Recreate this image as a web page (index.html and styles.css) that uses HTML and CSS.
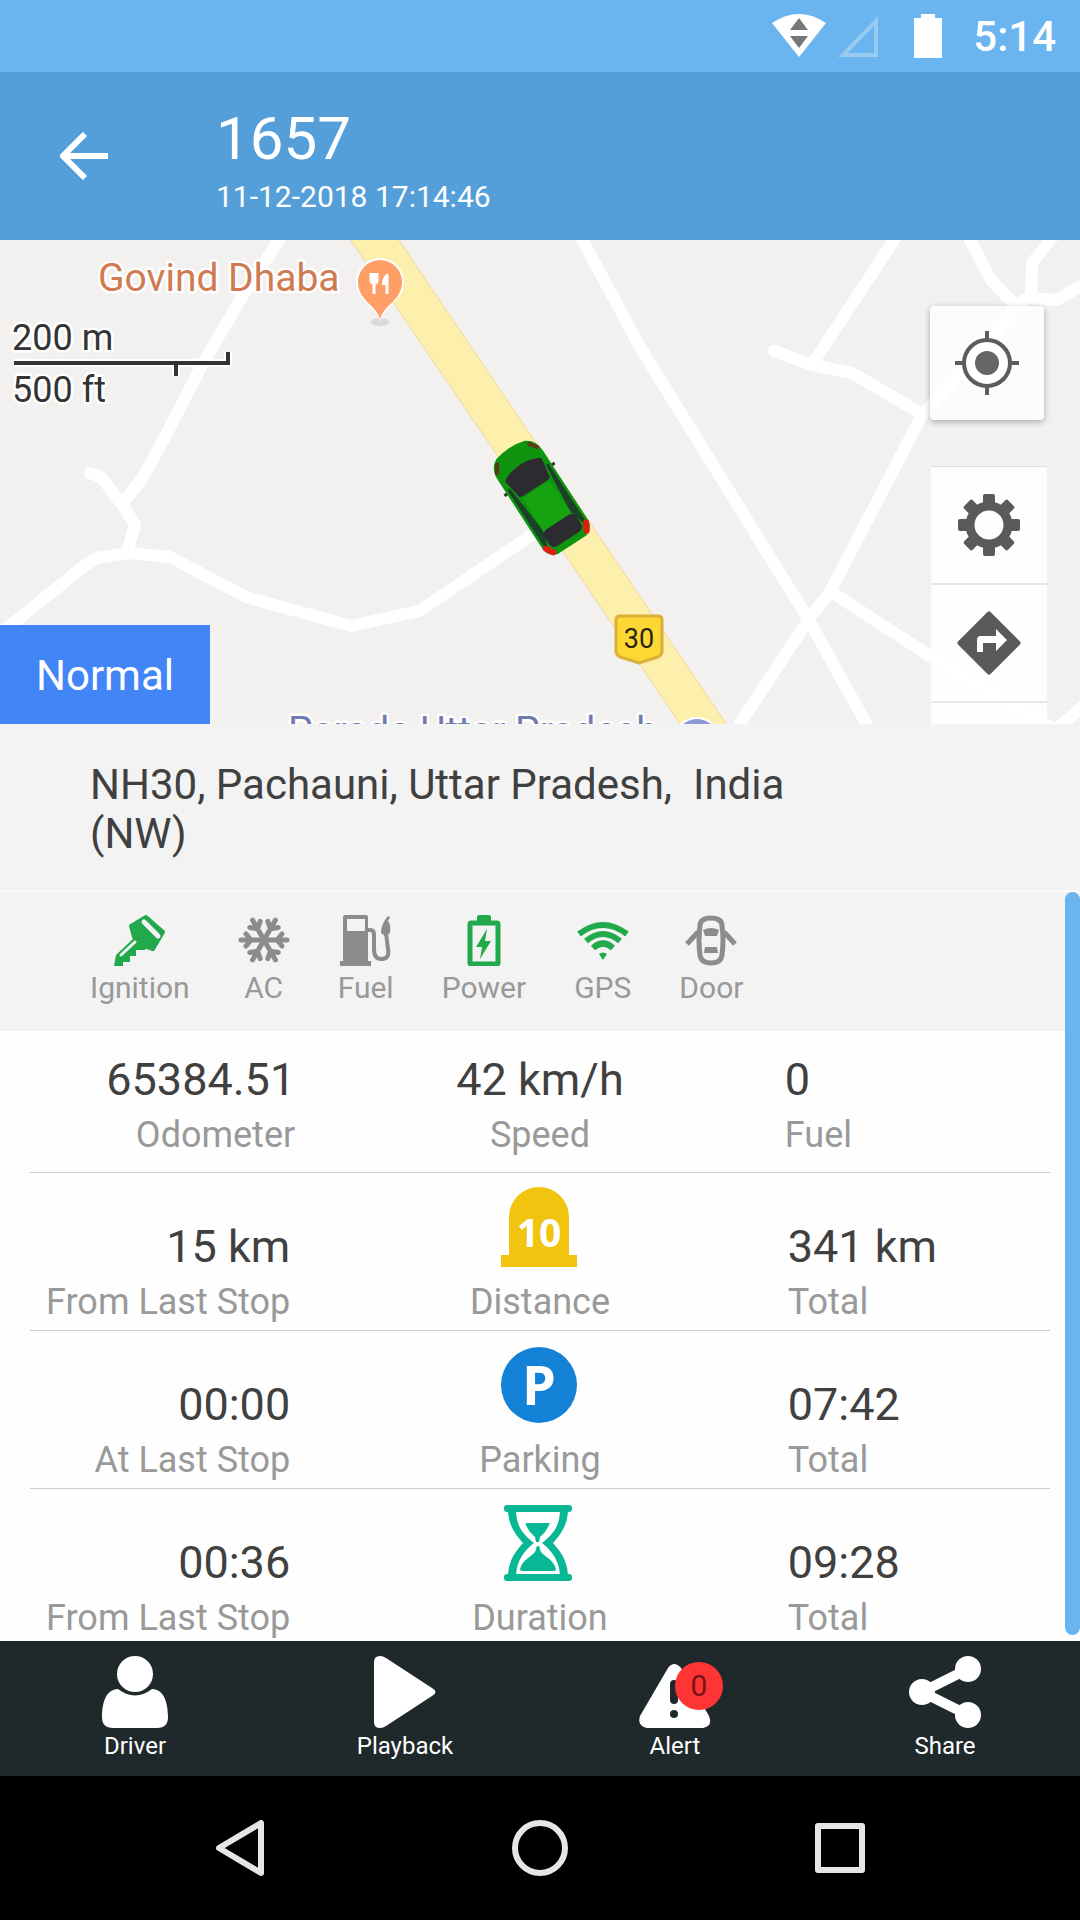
FILE: index.html
```html
<!DOCTYPE html>
<html lang="en">

<head>
    <meta charset="UTF-8">
    <meta name="viewport" content="width=device-width, initial-scale=1.0">
    <title>Vehicle 1657</title>
    <link rel="stylesheet" href="styles.css">
</head>

<body>
    <div class="status-bar">
        <svg class="wifi" width="54" height="44" viewBox="0 0 54 44">
            <path d="M0 9Q27-9 54 9L27 43z" fill="#fff" />
            <path d="M27 4l9 12H18zM18 22h18l-9 12z" fill="#777" />
        </svg>
        <svg class="signal" width="44" height="44" viewBox="0 0 44 44">
            <path d="M40 7v34H7z" fill="none" stroke="#97cbf2" stroke-width="4" />
        </svg>
        <svg class="battery" width="28" height="44" viewBox="0 0 28 44">
            <path d="M7 0h14v4h7v40H0V4h7z" fill="#fff" />
        </svg>
        <span class="clock">5:14</span>
    </div>

    <header class="header">
        <button class="back-btn" aria-label="Back">
            <svg width="48" height="48" viewBox="0 0 48 48">
                <path d="M48 24H5M25 2L3 24l22 22" fill="none" stroke="#fff" stroke-width="6" />
            </svg>
        </button>
        <div class="title">
            <h1>1657</h1>
            <p>11-12-2018 17:14:46</p>
        </div>
    </header>

    <div class="map">
        <svg class="map-canvas" viewBox="0 0 1080 484" preserveAspectRatio="xMinYMin slice">
            <!-- minor roads -->
            <g class="roads">
                <path d="M282-5L242 57 203 123 165 197 143 237 124 262" />
                <path d="M90 233l11 4 23 30 11 18-8 28" />
                <path d="M-20 410L11 385 79 330 96 318 127 313 170 317 246 357 351 386 419 371 532 295" />
                <path d="M578-8L640 107 807 377 872 494" />
                <path d="M733 494L807 382 831 350 922 175 960 133 1017 65" />
                <path d="M774 111l38 14 40 8 70 41" />
                <path d="M898-6L813 123" />
                <path d="M967-6l24 46 24 25 14-7 28 2 30-18" />
                <path d="M1031 57l1-34 24-30" />
                <path d="M833 353l103 67 120 70 40-35" />
            </g>
            <!-- highway -->
            <path d="M348-4L683 488h46L396-4z" fill="#fdf0ac" stroke="#f3d796" />
            <!-- restaurant pin -->
            <ellipse cx="380" cy="82" rx="9" ry="4" fill="#dadada" />
            <path d="M380 82c-2-14-24-20-24-40a24 24 0 0 1 48 0c0 20-22 26-24 40z" fill="#fff" />
            <path d="M380 80c-2-14-22-19-22-38a22 22 0 0 1 44 0c0 19-20 24-22 38z" fill="#ff9e67" />
            <path d="M371 33v7q0 3 3 3t3-3v-7M374 33v21M387 54V35" fill="none" stroke="#fff" stroke-width="3" />
            <path d="M388 33q-6 3-6 12h6z" fill="#fff" />
            <text class="place food" x="98" y="51">Govind Dhaba</text>
            <!-- city label -->
            <circle cx="697" cy="502" r="25" fill="#fff" />
            <circle cx="697" cy="501" r="22" fill="#8f99d6" />
            <text class="place city" x="288" y="504">Parada Uttar Pradesh</text>
            <!-- route shield -->
            <path d="M620 376h38q4 0 4 4v31q0 4-4 6l-19 6-19-6q-4-2-4-6v-31q0-4 4-4z" fill="#fdd835" stroke="#d9b13a" stroke-width="3" />
            <text class="shield" x="639" y="408">30</text>
            <!-- scale -->
            <text class="scale" x="12" y="110">200 m</text>
            <text class="scale" x="12" y="162">500 ft</text>
            <path d="M14 123h214v-11M176 123v13" fill="none" stroke="#fff" stroke-width="8" />
            <path d="M14 123h214v-11M176 123v13" fill="none" stroke="#333" stroke-width="4" />
            <!-- tracked car -->
            <g transform="translate(541 257) rotate(-33)">
                <path d="M-30-21h60" stroke="#333" stroke-width="3" />
                <path d="M-17-56Q0-61 17-56 27-51 27-38V45Q26 54 17 57H-17Q-26 54-27 45V-38Q-27-51-17-56z" fill="#0f9410" />
                <path d="M-23-24L-18 30-23 44zM23-24L18 30 23 44z" fill="#1d4028" stroke="#1d4028" stroke-width="3" />
                <path d="M-18-26Q0-34 18-26L15-9h-30z" transform="translate(0 -5)" fill="#2c2c30" stroke="#2c2c30" stroke-width="7" stroke-linejoin="round" />
                <path d="M-16-9h32l1 40h-34z" fill="#16a312" />
                <rect x="-19" y="30" width="38" height="20" rx="6" fill="#2c2c30" />
                <path d="M-24 46l4 7M24 46l-4 7" stroke="#e01b10" stroke-width="6" stroke-linecap="round" />
                <path d="M-24-44l5-7M24-44l-5-7" stroke="#5c3a17" stroke-width="4" stroke-linecap="round" />
            </g>
        </svg>

        <button class="locate-btn" aria-label="My location">
            <svg width="64" height="64" viewBox="0 0 64 64">
                <circle cx="32" cy="32" r="23" fill="#fff" stroke="#5c5c5c" stroke-width="4" />
                <circle cx="32" cy="32" r="12" fill="#666" />
                <path d="M32 0v9M32 55v9M0 32h9M55 32h9" stroke="#5c5c5c" stroke-width="4" />
            </svg>
        </button>

        <div class="map-tools">
            <button aria-label="Settings">
                <svg width="62" height="62" viewBox="-31 -31 62 62" fill="#5a5a5a">
                    <circle r="19" fill="none" stroke="#5a5a5a" stroke-width="9" />
                    <rect id="tooth" x="-6" y="-31" width="12" height="12" rx="2" />
                    <use href="#tooth" transform="rotate(45)" />
                    <use href="#tooth" transform="rotate(90)" />
                    <use href="#tooth" transform="rotate(135)" />
                    <use href="#tooth" transform="rotate(180)" />
                    <use href="#tooth" transform="rotate(225)" />
                    <use href="#tooth" transform="rotate(270)" />
                    <use href="#tooth" transform="rotate(315)" />
                </svg>
            </button>
            <button aria-label="Directions">
                <svg width="64" height="64" viewBox="0 0 64 64">
                    <path d="M32 3l29 29-29 29L3 32z" fill="#5a5a5a" stroke="#5a5a5a" stroke-width="5" stroke-linejoin="round" />
                    <path d="M20 41V29q0-4 4-4h15v-7l11 11-11 11v-8H26v9z" fill="#fff" />
                </svg>
            </button>
            <button aria-label="More"></button>
        </div>

        <button class="map-type">Normal</button>
    </div>

    <div class="address">NH30, Pachauni, Uttar Pradesh,&nbsp; India (NW)</div>

    <main class="details">
        <ul class="sensors">
            <li>
                <svg viewBox="0 0 52 52">
                    <path d="M32 3L49 18 39 35 30 32 20 23 17 12z" fill="#22a94b" stroke="#22a94b" stroke-width="4" stroke-linejoin="round" />
                    <path d="M20 24L2 41 0 52h9v-4h7v-6h6v-6h9l2-6z" fill="#22a94b" />
                    <path d="M30 8l14 14" stroke="#f3f3f3" stroke-width="5" stroke-linecap="round" />
                    <path d="M21 28L7 41" stroke="#f3f3f3" stroke-width="3" stroke-linecap="round" />
                </svg>
                <span>Ignition</span>
            </li>
            <li>
                <svg viewBox="-26 -26 52 52" fill="none" stroke="#8c8c8c" stroke-width="5" stroke-linecap="round">
                    <g id="arm">
                        <path d="M0 0h23M13 0l5-6M13 0l5 6" />
                    </g>
                    <use href="#arm" transform="rotate(60)" />
                    <use href="#arm" transform="rotate(120)" />
                    <use href="#arm" transform="rotate(180)" />
                    <use href="#arm" transform="rotate(240)" />
                    <use href="#arm" transform="rotate(300)" />
                </svg>
                <span>AC</span>
            </li>
            <li>
                <svg viewBox="0 0 52 52">
                    <path d="M5 1h21q2 0 2 2v44h3v5H0v-5h3V3q0-2 2-2zm2 4v12h18V5z" fill="#8c8c8c" fill-rule="evenodd" />
                    <path d="M28 16h2q4 0 4 4v15q0 10 7 10 9 0 7-10l-2-16" fill="none" stroke="#8c8c8c" stroke-width="4" />
                    <path d="M41 19q0-9 7-17l2 1-2 4q3 3 2 12l-5 3z" fill="#8c8c8c" />
                </svg>
                <span>Fuel</span>
            </li>
            <li>
                <svg viewBox="0 0 52 52">
                    <rect x="12" y="9" width="28" height="41" rx="1" fill="none" stroke="#22a94b" stroke-width="5" />
                    <rect x="19" y="1" width="14" height="8" rx="2" fill="#22a94b" />
                    <path d="M29 15L18 33h6l-2 12 11-18h-6z" fill="#22a94b" />
                </svg>
                <span>Power</span>
            </li>
            <li>
                <svg viewBox="0 0 52 52">
                    <path d="M2 20q24-18 48 0M9 27q17-14 34 0M16 34q10-9 20 0" fill="none" stroke="#22a94b" stroke-width="6" />
                    <path d="M22 40q4-3 8 0l-4 6z" fill="#22a94b" />
                </svg>
                <span>GPS</span>
            </li>
            <li>
                <svg viewBox="0 0 52 52">
                    <path d="M15 12q0-8 11-8t11 8q2 14 0 29-1 8-11 8t-11-8q-2-15 0-29z" fill="none" stroke="#8c8c8c" stroke-width="5" />
                    <path d="M13 18L2 30M39 18l11 12" stroke="#8c8c8c" stroke-width="5" />
                    <path d="M18 16q8-4 16 0l-2 6H20zM20 33h12l1 6H19z" fill="#8c8c8c" />
                </svg>
                <span>Door</span>
            </li>
        </ul>

        <table class="stats">
            <tr class="summary">
                <td><b>65384.51</b><span>Odometer</span></td>
                <td><b>42 km/h</b><span>Speed</span></td>
                <td><b>0</b><span>Fuel</span></td>
            </tr>
            <tr>
                <td><b>15 km</b><span>From Last Stop</span></td>
                <td>
                    <svg viewBox="0 0 80 80">
                        <path d="M9 68V30a30 30 0 0 1 60 0v38h8v12H1V68z" fill="#f1c40f" />
                        <text class="stone" x="39" y="60">10</text>
                    </svg>
                    <span>Distance</span>
                </td>
                <td><b>341 km</b><span>Total</span></td>
            </tr>
            <tr>
                <td><b>00:00</b><span>At Last Stop</span></td>
                <td>
                    <svg viewBox="0 0 80 80">
                        <circle cx="39" cy="40" r="38" fill="#1281d6" />
                        <text class="parking" x="39" y="60">P</text>
                    </svg>
                    <span>Parking</span>
                </td>
                <td><b>07:42</b><span>Total</span></td>
            </tr>
            <tr>
                <td><b>00:36</b><span>From Last Stop</span></td>
                <td>
                    <svg viewBox="0 0 80 80" fill="#08b894">
                        <path d="M8 8h60c-1 16-8 24-15 32 7 8 14 16 15 32H8c1-16 8-24 15-32C16 32 9 24 8 8z" />
                        <path d="M16 9h44c-1 16-8 23-18 31 10 8 17 17 18 32H16c1-15 8-24 18-32C24 32 17 25 16 9z" fill="#fff" />
                        <path d="M27 20h22q1 0 0 2-3 7-9 12l-1 5h-3l-1-5q-6-5-9-12-1-2 1-2zM38 43q2 0 2 4c2 6 13 8 16 19q0 2-2 2H22q-2 0-2-2c3-11 14-13 16-19q0-4 2-4z" />
                        <rect x="4" y="2" width="68" height="7" rx="3" />
                        <rect x="4" y="71" width="68" height="7" rx="3" />
                    </svg>
                    <span>Duration</span>
                </td>
                <td><b>09:28</b><span>Total</span></td>
            </tr>
        </table>
        <div class="scroll-thumb"></div>
    </main>

    <nav class="tab-bar">
        <button>
            <svg viewBox="0 0 72 72" fill="#fff">
                <circle cx="36" cy="18" r="18" />
                <path d="M19 33q17 13 34 0c12 0 16 14 16 28q0 11-11 11H14Q3 72 3 61c0-14 4-28 16-28z" />
            </svg>
            Driver
        </button>
        <button>
            <svg viewBox="0 0 72 72" fill="#fff">
                <path d="M5 6q0-6 6-6 3 0 6 2l46 30q7 4 0 8L17 70q-3 2-6 2-6 0-6-6z" />
            </svg>
            Playback
        </button>
        <button>
            <svg viewBox="0 0 72 72">
                <path d="M29 12q6-8 13 0l28 48q4 10-6 12H8q-10-2-7-12z" fill="#fff" />
                <path d="M35 28v16" stroke="#1f292b" stroke-width="8" stroke-linecap="round" />
                <circle cx="35" cy="58" r="4" fill="#1f292b" />
            </svg>
            Alert
            <span class="badge">0</span>
        </button>
        <button>
            <svg viewBox="0 0 72 72" fill="#fff">
                <path d="M59 13L13 36l46 23" fill="none" stroke="#fff" stroke-width="10" />
                <circle cx="59" cy="13" r="13" />
                <circle cx="13" cy="36" r="13" />
                <circle cx="59" cy="59" r="13" />
            </svg>
            Share
        </button>
    </nav>

    <div class="system-nav">
        <button aria-label="Back">
            <svg viewBox="0 0 56 56"><path d="M49 3v50L7 28z" /></svg>
        </button>
        <button aria-label="Home">
            <svg viewBox="0 0 56 56"><circle cx="28" cy="28" r="25" /></svg>
        </button>
        <button aria-label="Recent apps">
            <svg viewBox="0 0 56 56"><rect x="6" y="6" width="44" height="44" /></svg>
        </button>
    </div>
</body>

</html>
```
FILE: styles.css
```css
* {
    box-sizing: border-box;
    margin: 0;
    padding: 0;
}

body {
    display: flex;
    flex-direction: column;
    height: 100vh;
    font-family: Roboto, sans-serif;
    color: #404040;
    background: #fefefe;
}

button {
    border: none;
    background: none;
    font-family: inherit;
    cursor: pointer;
}

svg {
    display: block;
}

.status-bar {
    display: flex;
    align-items: center;
    justify-content: flex-end;
    height: 72px;
    padding-right: 24px;
    background: #6ab5ef;
}

.status-bar .signal {
    margin: 0 34px 0 10px;
}

.status-bar .clock {
    margin-left: 31px;
    font-size: 42px;
    font-weight: 500;
    color: #fff;
}

.header {
    display: flex;
    align-items: center;
    height: 168px;
    padding-left: 60px;
    color: #fff;
    background: #549fd9;
}

.back-btn {
    width: 156px;
}

.title {
    padding-top: 12px;
}

.title h1 {
    font-size: 60px;
    font-weight: 400;
    line-height: 70px;
}

.title p {
    font-size: 30px;
    line-height: 46px;
}

.map {
    position: relative;
    flex: none;
    height: 484px;
    overflow: hidden;
    background: #f2f1f0;
}

.map-canvas {
    width: 100%;
    height: 100%;
}

.roads path {
    fill: none;
    stroke: #fff;
    stroke-width: 12px;
    stroke-linecap: round;
    stroke-linejoin: round;
}

.place,
.scale {
    font-size: 36px;
    fill: #333;
    stroke: #fff;
    stroke-width: 5px;
    stroke-linejoin: round;
    paint-order: stroke;
}

.place {
    font-size: 39px;
}

.food {
    fill: #cf7a50;
}

.city {
    fill: #727bb0;
}

.shield {
    font-size: 27px;
    fill: #2b2413;
    text-anchor: middle;
}

.locate-btn {
    position: absolute;
    top: 66px;
    right: 36px;
    display: grid;
    place-items: center;
    width: 114px;
    height: 114px;
    border-radius: 4px;
    background: rgba(255, 255, 255, 0.8);
    box-shadow: 0 2px 6px rgba(0, 0, 0, 0.3);
}

.map-tools {
    position: absolute;
    top: 226px;
    right: 33px;
    width: 116px;
    border-top: 1px solid #dedede;
    background: rgba(255, 255, 255, 0.9);
}

.map-tools button {
    display: grid;
    place-items: center;
    width: 100%;
    height: 118px;
    border-bottom: 2px solid #e6e6e6;
}

.map-type {
    position: absolute;
    left: 0;
    bottom: 0;
    width: 210px;
    height: 99px;
    padding-top: 2px;
    font-size: 42px;
    color: #fff;
    background: #4285f6;
}

.address {
    padding: 36px 200px 32px 90px;
    font-size: 42px;
    line-height: 49px;
    background: #f3f3f3;
}

.details {
    position: relative;
    flex: 1;
    min-height: 0;
    overflow: hidden;
    border-top: 2px solid #fafafa;
}

.sensors {
    display: flex;
    gap: 48px;
    padding: 22px 90px 25px;
    list-style: none;
    background: #f3f3f3;
}

.sensors li {
    display: flex;
    flex-direction: column;
    align-items: center;
    gap: 4px;
    font-size: 30px;
    line-height: 36px;
    color: #999;
}

.sensors svg {
    width: 52px;
    height: 52px;
}

.stats {
    width: calc(100% - 60px);
    margin: 0 30px;
    table-layout: fixed;
    border-collapse: collapse;
}

.stats td {
    width: 26%;
    padding: 14px 5px 3px;
    vertical-align: bottom;
    text-align: center;
    border-bottom: 1px solid #ccc;
}

.stats td:first-child {
    text-align: right;
}

.stats td:nth-child(2) {
    width: 48%;
}

.stats td:last-child {
    padding-left: 3px;
    text-align: left;
}

.stats .summary td {
    padding: 19px 0 12px;
}

.stats b {
    display: block;
    font-size: 45px;
    font-weight: 400;
    line-height: 60px;
}

.stats span {
    display: block;
    font-size: 36px;
    line-height: 50px;
    color: #999;
}

.stats svg {
    width: 80px;
    height: 80px;
    margin: 0 auto 10px;
}

.stats text {
    font-family: "Open Sans", sans-serif;
    font-weight: 700;
    fill: #fff;
    text-anchor: middle;
}

.stone {
    font-size: 39px;
}

.parking {
    font-size: 54px;
}

.scroll-thumb {
    position: absolute;
    top: 0;
    right: 0;
    bottom: 6px;
    width: 15px;
    border-radius: 8px;
    background: #6ab5ef;
}

.tab-bar {
    display: flex;
    background: #1f292b;
}

.tab-bar button {
    position: relative;
    display: flex;
    flex: 1;
    flex-direction: column;
    align-items: center;
    gap: 4px;
    padding: 15px 0 16px;
    font-size: 24px;
    line-height: 28px;
    color: #fff;
}

.tab-bar svg {
    width: 72px;
    height: 72px;
}

.tab-bar .badge {
    position: absolute;
    top: 21px;
    left: 50%;
    width: 48px;
    height: 48px;
    border-radius: 50%;
    font-size: 30px;
    line-height: 48px;
    color: #7a1414;
    background: #ff3535;
}

.system-nav {
    display: flex;
    height: 144px;
    padding: 0 90px;
    background: #000;
}

.system-nav button {
    display: grid;
    flex: 1;
    place-items: center;
}

.system-nav svg {
    width: 56px;
    height: 56px;
    fill: none;
    stroke: #e6e6e6;
    stroke-width: 6px;
    stroke-linejoin: round;
}
```
